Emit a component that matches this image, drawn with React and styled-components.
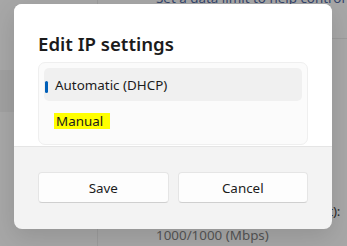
import styled, { createGlobalStyle } from 'styled-components';

const GlobalStyle = createGlobalStyle`
    * {
        box-sizing: border-box;
    }
    html, body {
        margin: 0;
        padding: 0;
        background: #a7a7a7;
    }
    body {
        font-family: "Noto Sans", "Open Sans", sans-serif;
        -webkit-font-smoothing: antialiased;
    }
`;

const Screen = styled.div`
    position: relative;
    width: 347px;
    height: 246px;
    overflow: hidden;
    display: flex;
    background: #a7a7a7;
`;

const Sidebar = styled.div`
    flex: 0 0 98px;
    border-right: 1px solid #9c9c9c;
    padding: 70px 0 0 0;
`;

const NavItem = styled.div`
    height: 42px;
    background: ${({ active }) => active ? '#a0a0a0' : 'transparent'};
`;

const Main = styled.div`
    flex: 1 1 auto;
    display: flex;
    flex-direction: column;
    padding: 0 0 0 58px;
    margin: -12px 0 0 0;
    font-size: 13.4px;
`;

const TopCard = styled.div`
    height: 51px;
    border-bottom: 1px solid #9b9b9b;
    margin: 0 0 0 -58px;
    padding: 0 0 0 58px;
`;

const LinkText = styled.div`
    color: #34446b;
    line-height: 20px;
    white-space: nowrap;
`;

const Label = styled.div`
    color: #2b2b2b;
    line-height: 20px;
    white-space: nowrap;
    letter-spacing: -0.2px;
    margin: ${({ top }) => top}px 0 0 0;
`;

const Value = styled.div`
    color: #555;
    line-height: 20px;
    white-space: nowrap;
    margin: 4px 0 0 0;
`;

const Dialog = styled.div`
    position: absolute;
    left: 14px;
    top: 4px;
    width: 318px;
    height: 225px;
    border-radius: 8px;
    background: #f3f3f3;
    overflow: hidden;
    display: flex;
    flex-direction: column;
    box-shadow: 0 8px 24px rgb(0 0 0 / 12%);
`;

const Body = styled.div`
    flex: 0 0 143px;
    background: #fff;
    padding: 27px 24px 0 24px;
    border-bottom: 1px solid #e5e5e5;
`;

const Title = styled.h2`
    margin: 0 0 5px 0;
    font-size: 18.6px;
    font-weight: 600;
    line-height: 26px;
    color: #1b1b1b;
`;

const List = styled.div`
    display: flex;
    flex-direction: column;
    gap: 3px;
    padding: 5px;
    background: #fbfbfb;
    border: 1px solid #efefef;
    border-radius: 7px;
    height: 83px;
`;

const Option = styled.div`
    position: relative;
    height: 33px;
    display: flex;
    align-items: center;
    padding: 0 0 0 11px;
    border-radius: 5px;
    background: ${({ selected }) => selected ? '#f0f0f0' : 'transparent'};
    font-size: 13.4px;
    color: #1b1b1b;
    &::before {
        content: '';
        display: ${({ selected }) => selected ? 'block' : 'none'};
        position: absolute;
        left: 1px;
        top: 13px;
        width: 3px;
        height: 12px;
        border-radius: 2px;
        background: #005fb8;
    }
`;

const Mark = styled.span`
    background: #ffff00;
    padding: 0 7px 0 2px;
    margin: 0 0 0 -1px;
    line-height: 16px;
`;

const Footer = styled.div`
    flex: 1 1 auto;
    display: flex;
    gap: 9px;
    padding: 25px 24px 0 24px;
`;

const Button = styled.button`
    flex: 1 1 0;
    height: 31px;
    border: 1px solid #e5e5e5;
    border-bottom-color: #cfcfcf;
    border-radius: 4px;
    background: #fdfdfd;
    font-family: inherit;
    font-size: 13.4px;
    color: #1b1b1b;
    padding: 0;
`;

export default function App() {
    return (
        <>
            <GlobalStyle />
            <Screen>
                <Sidebar>
                    <NavItem active />
                </Sidebar>
                <Main>
                    <TopCard>
                        <LinkText>Set a data limit to help control</LinkText>
                    </TopCard>
                    <Label top={162}>Link speed (Receive/Transmit):</Label>
                    <Value>1000/1000 (Mbps)</Value>
                </Main>
                <Dialog>
                    <Body>
                        <Title>Edit IP settings</Title>
                        <List>
                            <Option selected>Automatic (DHCP)</Option>
                            <Option><Mark>Manual</Mark></Option>
                        </List>
                    </Body>
                    <Footer>
                        <Button>Save</Button>
                        <Button>Cancel</Button>
                    </Footer>
                </Dialog>
            </Screen>
        </>
    );
}
